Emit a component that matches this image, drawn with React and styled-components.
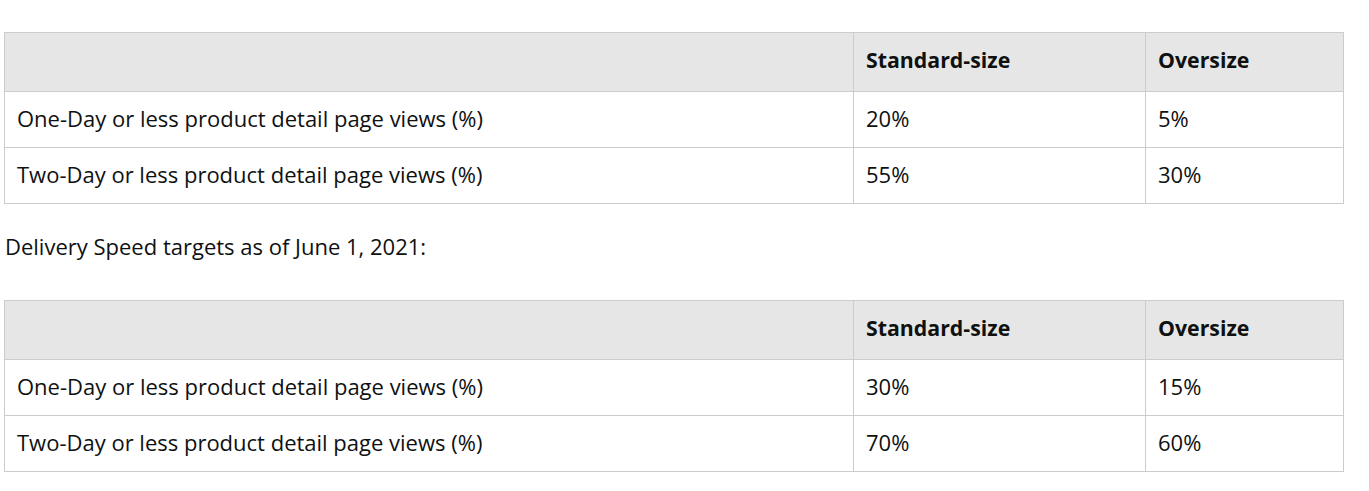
import React from "react";
import styled, { createGlobalStyle } from "styled-components";

const Global = createGlobalStyle`
  html, body { margin: 0; padding: 0; background: #fff; }
  body { font-family: "Open Sans", "Noto Sans", sans-serif; color: #0f1111; }
`;

const Page = styled.div`
  padding: 32px 25px 0 4px;
  display: flex;
  flex-direction: column;
`;

const Table = styled.table`
  width: 1339px;
  border-collapse: collapse;
  font-size: 22px;
  table-layout: fixed;
`;

const Head = styled.th`
  background: #e6e6e6;
  border: 1px solid #cccccc;
  text-align: left;
  font-weight: 700;
  font-size: 21.3px;
  padding: 0 12px 5px;
  height: 59px;
  box-sizing: border-box;
`;

const Cell = styled.td`
  border: 1px solid #cccccc;
  padding: 0 12px 4px;
  height: 51px;
  vertical-align: middle;
`;

const Para = styled.p`
  margin: 0;
  font-size: 22px;
  line-height: 30px;
  padding: 27px 0 0 1px;
  height: 69px;
`;

const rowsA = [
  ["One-Day or less product detail page views (%)", "20%", "5%"],
  ["Two-Day or less product detail page views (%)", "55%", "30%"],
];
const rowsB = [
  ["One-Day or less product detail page views (%)", "30%", "15%"],
  ["Two-Day or less product detail page views (%)", "70%", "60%"],
];

function SpeedTable({ rows }) {
  return (
    <Table>
      <colgroup>
        <col style={{ width: 849 }} />
        <col style={{ width: 292 }} />
        <col style={{ width: 198 }} />
      </colgroup>
      <thead>
        <tr>
          <Head />
          <Head>Standard-size</Head>
          <Head>Oversize</Head>
        </tr>
      </thead>
      <tbody>
        {rows.map((r) => (
          <tr key={r[0]}>
            {r.map((c, i) => (
              <Cell key={i}>{c}</Cell>
            ))}
          </tr>
        ))}
      </tbody>
    </Table>
  );
}

export default function App() {
  return (
    <>
      <Global />
      <Page>
        <SpeedTable rows={rowsA} />
        <Para>Delivery Speed targets as of June 1, 2021:</Para>
        <SpeedTable rows={rowsB} />
      </Page>
    </>
  );
}
